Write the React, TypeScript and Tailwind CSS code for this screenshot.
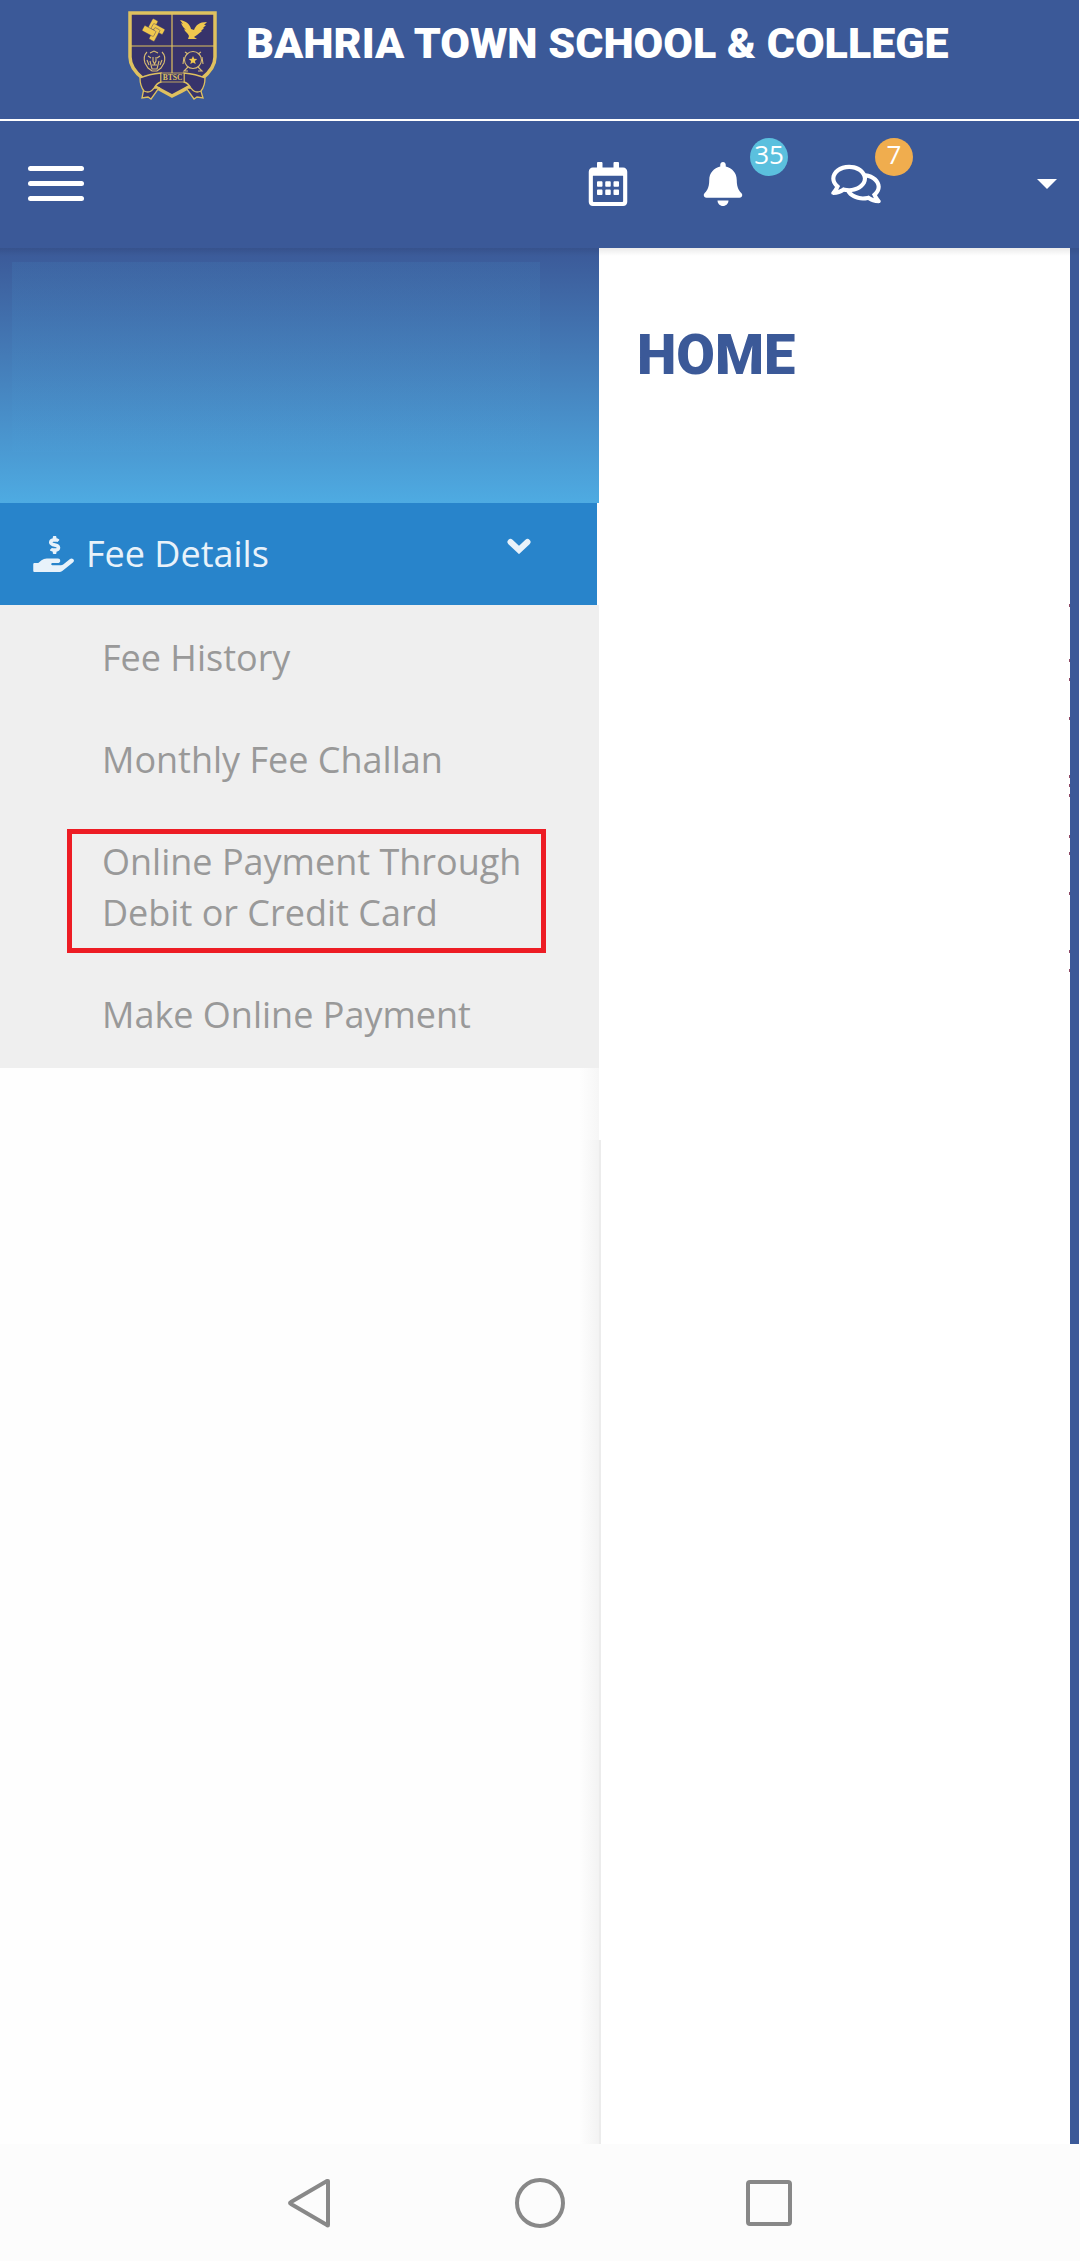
import React from 'react'
import { FaBell, FaHandHoldingUsd, FaRegCalendarAlt, FaRegComments } from 'react-icons/fa'

const feeLinks = [
  { label: 'Fee History' },
  { label: 'Monthly Fee Challan' },
  { label: 'Online Payment Through Debit or Credit Card', highlighted: true },
  { label: 'Make Online Payment' },
]

// y positions of the table marks peeking out at the right edge of the page
const edgeMarks = [357, 412, 431, 470, 528, 537, 547, 588, 605, 645, 703, 722]

function Crest() {
  return (
    <svg viewBox="0 0 90 90" className="h-[90px] w-[90px] shrink-0" role="img" aria-label="School crest">
      <path d="M2 2H87V46C87 63 66 74 44 85C23 74 2 63 2 46Z" fill="#37336b" stroke="#dfc15f" strokeWidth="3.5" />
      <path d="M44 3V64M3 35H86" stroke="#dfc15f" strokeWidth="1.2" fill="none" />
      {/* knot */}
      <g transform="translate(25.5 19) rotate(28)" fill="#f0c84e" stroke="#37336b" strokeWidth="0.4">
        <rect x="-6" y="-10" width="6" height="13" rx="1" />
        <rect x="-6" y="-10" width="6" height="13" rx="1" transform="rotate(90)" />
        <rect x="-6" y="-10" width="6" height="13" rx="1" transform="rotate(180)" />
        <rect x="-6" y="-10" width="6" height="13" rx="1" transform="rotate(270)" />
      </g>
      {/* eagle */}
      <path
        d="M52 9C58 10 62 13 63 18L66 19C68 14 71 11 79 11L76 14H78L75 17H76L73 20H74L69 24L66 26L69 28H60L61 25C60 22 57 21 56 18L58 19C56 17 54 15 53 12L55 13Z"
        fill="#f0c84e"
      />
      {/* lion */}
      <g fill="none" stroke="#d9bc72" strokeWidth="1.1">
        <path d="M19 41c-4 4-3 8-2 11l3 5 4 3h5l4-3 3-5c1-3 2-7-2-11M22 42l4-2 4 2" />
        <path d="M20 45l3 2m9-2-3 2M22 50l2 8h5l2-8M19 49l2 5m13-5-2 5M25 46v4l1.500 3 1.500-3v-4M24 54h5" />
      </g>
      {/* star */}
      <g fill="none" stroke="#d9bc72" strokeWidth="1.1">
        <circle cx="65" cy="49" r="8.5" />
        <path d="M57 41l3 2M73 41l-3 2M60 56l-4 4h4M70 56l4 4h-4M56 46l-1 7M74 46l1 7" />
      </g>
      <path d="M65 45l1.2 2.8 3 .2-2.3 2 .8 3-2.7-1.6-2.7 1.6.8-3-2.3-2 3-.2z" fill="#f0c84e" />
      {/* ribbon */}
      <g fill="#37336b" stroke="#dfc15f" strokeWidth="1.3">
        <path d="M16 77L14 87l6-1 3 2 8-11z" />
        <path d="M72 77l3 10-6-1-3 2-8-11z" />
        <path d="M33 62Q21 63 12 67Q12 75 16 80Q22 83 26 77Q29 72 33 71Z" />
        <path d="M56 62Q68 63 77 67Q77 75 73 80Q67 83 63 77Q60 72 56 71Z" />
        <path d="M33 62H56V71H33Z" strokeWidth="0.8" />
      </g>
      <text x="44.5" y="69" textAnchor="middle" fontSize="7.5" fontWeight="700" fill="#dfc15f" className="font-['Liberation_Serif',serif]">
        BTSC
      </text>
    </svg>
  )
}

function NavIcons() {
  return (
    <div className="flex items-center text-white">
      <button aria-label="Calendar" className="mr-[71px]">
        <FaRegCalendarAlt className="size-11" />
      </button>
      <button aria-label="Notifications" className="relative mr-[86px]">
        <FaBell className="size-11" />
        <span className="absolute -top-6 left-[49px] size-[38px] rounded-full bg-[#5bc0de] text-center text-[26px] leading-[32px]">
          35
        </span>
      </button>
      <button aria-label="Messages" className="relative mr-[156px]">
        <FaRegComments className="h-11 w-[50px]" />
        <span className="absolute -top-6 left-[44px] size-[38px] rounded-full bg-[#f0ad4e] text-center text-[26px] leading-[32px]">
          7
        </span>
      </button>
      <button aria-label="Account menu" className="mr-[22px]">
        <svg viewBox="0 0 20 10" className="h-[10px] w-5" fill="currentColor">
          <path d="M0 0H20L10 10Z" />
        </svg>
      </button>
    </div>
  )
}

function Sidebar() {
  return (
    <aside className="flex w-[599px] shrink-0 flex-col bg-[#fefefe]">
      <div className="h-[255px] bg-linear-to-b from-[#3b5998] to-[#4eabe2] pt-[14px] pl-3">
        <div className="h-[190px] w-[528px] bg-linear-to-b from-[#4eabe2]/10 to-[#4eabe2]/5" />
      </div>
      <button className="mr-[2px] flex h-[102px] items-center bg-[#2884cb] pl-[33px] text-left text-[36px] leading-[51px] text-[#e8f2fa]">
        <FaHandHoldingUsd className="h-9 w-[41px]" />
        <span className="ml-3 pb-[2px]">Fee Details</span>
        <svg viewBox="0 0 24 16" className="mr-[66px] mb-4 ml-auto h-4 w-6" fill="none" stroke="currentColor" strokeWidth="6" strokeLinecap="round">
          <path d="M3.5 4L12 12L20.5 4" />
        </svg>
      </button>
      <ul className="bg-[#efefef] pt-px pb-[3px] text-[36px] leading-[51px] text-[#999]">
        {feeLinks.map((link) => (
          <li key={link.label} className="relative">
            <a href="#" className="block pt-[26px] pr-[70px] pb-[25px] pl-[102px]">
              {link.label}
            </a>
            {link.highlighted && (
              <span className="pointer-events-none absolute top-[19px] right-[53px] bottom-[10px] left-[67px] border-5 border-[#ed1c24]" />
            )}
          </li>
        ))}
      </ul>
      <div className="flex flex-1 flex-col items-end">
        <div className="h-[72px] w-5 bg-linear-to-r from-transparent to-[#f6f6f6]" />
        <div className="w-5 flex-1 bg-linear-to-r from-transparent to-[#f3f3f3]" />
      </div>
    </aside>
  )
}

export default function App() {
  return (
    <div className="flex min-h-screen flex-col bg-white font-['Open_Sans',sans-serif]">
      <header className="mr-px bg-[#3b5998]">
        <div className="flex h-[121px] justify-center border-b-2 border-white pt-[11px] pr-[2px]">
          <Crest />
          <h1 className="ml-7 font-['Roboto',sans-serif] text-[43px] leading-[64px] font-black whitespace-nowrap text-white">
            BAHRIA TOWN SCHOOL &amp; COLLEGE
          </h1>
        </div>
        <nav className="flex h-[127px] items-center justify-between pb-[2px] pl-7">
          <button aria-label="Toggle menu" className="flex flex-col gap-[10px]">
            <span className="h-[5px] w-14 rounded-full bg-white" />
            <span className="h-[5px] w-14 rounded-full bg-white" />
            <span className="h-[5px] w-14 rounded-full bg-white" />
          </button>
          <NavIcons />
        </nav>
      </header>

      <div className="relative mr-px flex flex-1 border-r-9 border-[#3b5998]">
        <Sidebar />
        <main className="flex flex-1 flex-col">
          <h2 className="mt-[67px] ml-[38px] font-['Roboto',sans-serif] text-[56px] leading-[80px] font-black text-[#3b5998]">HOME</h2>
          <div className="mt-[745px] w-[2px] flex-1 bg-[#ececec]" />
        </main>
        <div className="pointer-events-none absolute inset-x-0 top-0 -mr-[9px] h-2 bg-linear-to-b from-black/8 to-transparent" />
        <svg className="absolute top-0 right-0 h-[730px] w-px" aria-hidden="true">
          {edgeMarks.map((y) => (
            <rect key={y} y={y - 1} width="1" height="3" fill="#8f4a66" />
          ))}
        </svg>
      </div>

      <footer className="flex h-[117px] items-center justify-center gap-[181px] bg-[#fcfcfc]">
        <button aria-label="Back">
          <svg viewBox="0 0 46 52" className="h-[52px] w-[46px]" fill="none" stroke="#888" strokeWidth="4" strokeLinejoin="round">
            <path d="M40 4V48Q40 49 39 48L3 27Q1 26 3 25L39 4Z" />
          </svg>
        </button>
        <button aria-label="Home" className="size-[50px] rounded-full border-4 border-[#888]" />
        <button aria-label="Recent apps" className="size-[46px] rounded-[4px] border-4 border-[#888]" />
      </footer>
    </div>
  )
}
